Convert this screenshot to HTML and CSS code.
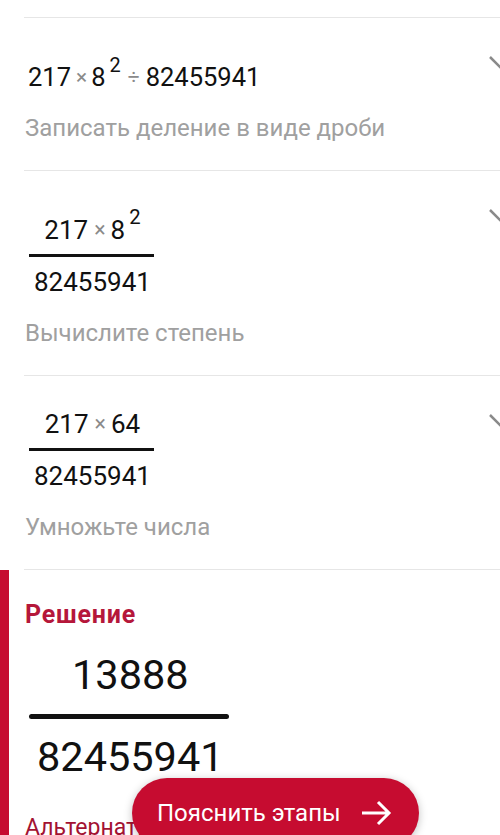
FILE: index.html
```html
<!DOCTYPE html>
<html lang="ru">
<head>
  <meta charset="UTF-8">
  <meta name="viewport" content="width=device-width, initial-scale=1.0">
  <title>Решение</title>
  <link rel="stylesheet" href="styles.css">
</head>
<body>
  <div class="screen">
    <!-- Steps -->
    <div class="steps">
      <div class="step step-first">
        <div class="step-body">
          <div class="expr">217<span class="op">×</span>8<span class="sup">2</span><span class="op op-div">÷</span>82455941</div>
          <div class="hint">Записать деление в виде дроби</div>
        </div>
        <svg class="chevron" width="24" height="14" viewBox="0 0 24 14"><path d="M2 2 L12 12 L22 2" /></svg>
      </div>

      <div class="step step-raised">
        <div class="step-body">
          <div class="frac">
            <div class="num">217<span class="op">×</span>8<span class="sup">2</span></div>
            <div class="bar"></div>
            <div class="den">82455941</div>
          </div>
          <div class="hint">Вычислите степень</div>
        </div>
        <svg class="chevron" width="24" height="14" viewBox="0 0 24 14"><path d="M2 2 L12 12 L22 2" /></svg>
      </div>

      <div class="step">
        <div class="step-body">
          <div class="frac">
            <div class="num">217<span class="op">×</span>64</div>
            <div class="bar"></div>
            <div class="den">82455941</div>
          </div>
          <div class="hint">Умножьте числа</div>
        </div>
        <svg class="chevron" width="24" height="14" viewBox="0 0 24 14"><path d="M2 2 L12 12 L22 2" /></svg>
      </div>
    </div>

    <!-- Solution -->
    <section class="solution">
      <h2>Решение</h2>
      <div class="frac frac-big">
        <div class="num">13888</div>
        <div class="bar"></div>
        <div class="den">82455941</div>
      </div>
      <div class="alt">Альтернативная форма</div>
    </section>

    <button class="explain">Пояснить этапы
      <svg width="32" height="26" viewBox="0 0 32 26"><path d="M2 13 H29 M18 2 L29 13 L18 24" /></svg>
    </button>
  </div>
</body>
</html>
```

FILE: styles.css
```css
body {
  margin: 0;
  font-family: Roboto, 'Noto Sans', sans-serif;
  background: #fff;
  color: #111;
}
.screen {
  position: relative;
  height: 835px;
  overflow: hidden;
}
.steps {
  padding-top: 17px;
}
.step {
  display: flex;
  margin-left: 24px;
  border-top: 1px solid #e6e6e6;
}
.step:last-child {
  border-bottom: 1px solid #e6e6e6;
}
.step-body {
  flex: 1;
  padding: 32px 0 28px 1px;
}
.step-first .step-body {
  padding-top: 41px;
}
.step-raised .step-body {
  padding-top: 43px;
}
.chevron {
  flex: none;
  margin-top: 37px;
  margin-right: -12px;
  fill: none;
  stroke: #8a8a8a;
  stroke-width: 2.5;
}
.expr {
  font-size: 25.5px;
  line-height: 36px;
  padding-left: 3px;
}
.op {
  position: relative;
  top: -0.1em;
  font-size: 0.82em;
  line-height: 1;
  color: #8a8a8a;
  margin: 0 4px 0 5px;
}
.op-div {
  margin: 0 6px 0 7px;
}
.sup {
  position: relative;
  top: -0.72em;
  font-size: 0.78em;
  line-height: 1;
  margin-left: 4px;
}
.hint {
  margin-top: 21px;
  font-size: 24px;
  line-height: 28px;
  color: #a0a0a0;
}
.expr + .hint {
  margin-top: 19px;
}
.frac {
  display: inline-flex;
  flex-direction: column;
  align-items: center;
  margin-left: 4px;
  font-size: 26px;
  line-height: 32px;
}
.frac .num,
.frac .den {
  padding: 0 3px 0 5px;
}
.frac .op {
  margin: 0 5px 0 6px;
}
.frac .bar {
  align-self: stretch;
  height: 3px;
  margin: 8px 0 9px;
  background: #111;
}
.solution {
  border-left: 9px solid #c60c30;
  padding: 0 0 0 16px;
  min-height: 300px;
}
.solution h2 {
  margin: 0;
  padding-top: 30px;
  font-size: 25px;
  line-height: 30px;
  font-weight: 700;
  letter-spacing: 0.8px;
  color: #b5173a;
}
.frac-big {
  margin-top: 22px;
  font-size: 41.5px;
  line-height: 46px;
}
.frac-big .num,
.frac-big .den {
  padding: 0 5px 0 8px;
}
.frac-big .bar {
  height: 5px;
  border-radius: 3px;
  margin: 16px 0 15px;
}
.alt {
  margin-top: 34px;
  font-size: 23px;
  line-height: 28px;
  color: #a31232;
}
.explain {
  position: absolute;
  left: 132px;
  top: 778px;
  width: 287px;
  height: 70px;
  display: flex;
  align-items: flex-start;
  padding: 21px 0 0 25px;
  gap: 19px;
  border: none;
  border-radius: 35px;
  background: #c60c30;
  color: #fff;
  font-family: Roboto, sans-serif;
  font-size: 24px;
  line-height: 28px;
  box-shadow: 0 2px 8px rgba(0, 0, 0, 0.25);
}
.explain svg {
  flex: none;
  fill: none;
  stroke: #fff;
  stroke-width: 3;
  margin-top: 1px;
}
```
